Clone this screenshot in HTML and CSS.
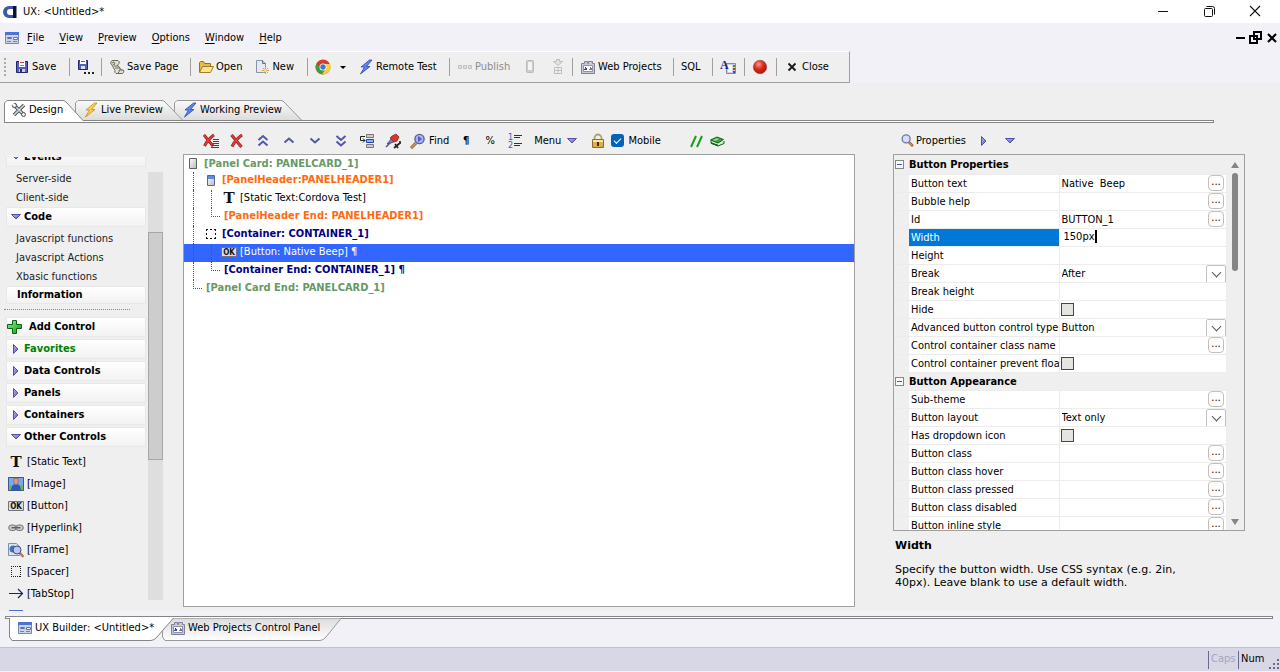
FILE: index.html
```
<!DOCTYPE html>
<html lang="en">
<head>
<meta charset="utf-8">
<title>UX: &lt;Untitled&gt;*</title>
<link rel="stylesheet" href="styles.css">
</head>
<body>
<svg class="defs" aria-hidden="true">
  <defs>
    <linearGradient id="g-tab" x1="0" y1="0" x2="0" y2="1"><stop offset="0" stop-color="#fafafa"/><stop offset="1" stop-color="#dcdcdc"/></linearGradient>
    <linearGradient id="g-tab2" x1="0" y1="0" x2="0" y2="1"><stop offset="0" stop-color="#dcdcdc"/><stop offset="1" stop-color="#fff"/></linearGradient>
    <linearGradient id="g-tri" x1="0" y1="0" x2="1" y2="1"><stop offset="0" stop-color="#b4b4f4"/><stop offset="1" stop-color="#5c5cd0"/></linearGradient>
    <linearGradient id="g-grn" x1="0" y1="0" x2="1" y2="1"><stop offset="0" stop-color="#8df08d"/><stop offset="1" stop-color="#08a010"/></linearGradient>
    <radialGradient id="g-red" cx=".4" cy=".3" r=".8"><stop offset="0" stop-color="#f79a88"/><stop offset=".45" stop-color="#d92a1c"/><stop offset="1" stop-color="#a01008"/></radialGradient>
    <linearGradient id="g-card" x1="0" y1="0" x2="1" y2="1"><stop offset="0" stop-color="#fff"/><stop offset="1" stop-color="#b8b8b8"/></linearGradient>
  </defs>
  <symbol id="i-app" viewBox="0 0 16 16"><path fill="#3c5aa8" fill-rule="evenodd" d="M7 2h6v12H7A6 6 0 0 1 7 2zM8 5a3 3 0 0 0 0 6h3V5z"/><path fill="#0c1238" d="M11 2h3.500v12H11z"/></symbol>
  <symbol id="i-form" viewBox="0 0 16 16"><path fill="#cdd6e8" stroke="#7488b8" d="M1.500 2.500h13v11h-13z"/><path fill="#4c74d8" d="M1 2h14v3H1z"/><path fill="#fff" stroke="#6474a0" d="M3.500 7.500h4v1h-4zM9.500 7.500h4v2h-4z"/><path stroke="#7484a8" d="M3 11.500h4M9 11.500h4"/></symbol>
  <symbol id="i-save" viewBox="0 0 16 16"><path fill="#5362b8" stroke="#20286c" d="M2.500 2.500h11v11h-11z"/><path fill="#fff" d="M5 2h6v6H5z"/><path stroke="#d04040" d="M6 3.500h4"/><path stroke="#8890b8" d="M6 6.500h4"/><path fill="#c8cce0" d="M5 10h6v3H5z"/><path fill="#28306c" d="M6 10h2v3H6z"/></symbol>
  <symbol id="i-saveas" viewBox="0 0 18 16"><path fill="#5362b8" stroke="#20286c" d="M1.500 1.500h9v9h-9z"/><path fill="#fff" d="M3 1h6v4H3z"/><path stroke="#d04040" d="M4 2.500h4"/><path fill="#dde" d="M4 7h4v3H4z"/><path fill="#222" d="M7 13h2v2H7zM11 13h2v2h-2zM15 13h2v2h-2z"/></symbol>
  <symbol id="i-scroll" viewBox="0 0 16 16"><path fill="#e4e2da" stroke="#6c6858" d="M3 1.500h6q2 1 1 3L8.500 6l4 5h2q1 2-1 3.500H7q-2-1-1-3L3 6Q0 4 3 1.500z"/><path fill="none" stroke="#6c6858" d="M3 4l2-1 1 2-2 1M5 7h4M6 9h5M9 14q2-1 1-3h3"/></symbol>
  <symbol id="i-open" viewBox="0 0 16 16"><path fill="#e8b848" stroke="#98701c" d="M1.500 13V3.500l1-1h3l1 2h6v3"/><path fill="#fde69a" stroke="#a87c20" d="M1.500 13.500l3-6h11l-3 6z"/></symbol>
  <symbol id="i-new" viewBox="0 0 16 16"><path fill="#e4e9f4" stroke="#8892a8" d="M2.500 1.500h6l3 3v9h-9z"/><path fill="#b8c4dc" stroke="#68748c" d="M8.500 1.500v3h3"/><path stroke="#eaa41c" d="M11.500 8v7M8 11.500h7M9 9l5 5M14 9l-5 5"/><circle cx="11.500" cy="11.500" r="1.500" fill="#ffe27a"/></symbol>
  <symbol id="i-chrome" viewBox="0 0 16 16"><circle cx="8" cy="8" r="7.500" fill="#d83a2c"/><path fill="#3f9d3c" d="M1.500 4.500A7.500 7.500 0 0 0 7 15.400L10 10 5 9z"/><path fill="#f6cf3a" d="M15 5a7.500 7.500 0 0 1-8 10.400L11 9 9.500 5z"/><circle cx="8" cy="8" r="3.500" fill="#fff"/><circle cx="8" cy="8" r="2.700" fill="#3c78d8"/></symbol>
  <symbol id="i-bolt" viewBox="0 0 16 16"><path stroke="currentColor" stroke-width=".8" d="M11.500 1L3 8h3.500L2.500 15 12 7.500H8.500L14 1z"/></symbol>
  <symbol id="i-publish" viewBox="0 0 16 16"><path fill="#e0e0e0" stroke="#c0c0c0" d="M1.500 6.500h3v3h-3zM6.500 6.500h3v3h-3zM11.500 6.500h3v3h-3z"/></symbol>
  <symbol id="i-phone" viewBox="0 0 16 16"><rect x="4.500" y="1.500" width="7" height="12" rx="1" fill="#ccc" stroke="#bbb"/><path fill="#f4f4f4" d="M6 3h4v8H6z"/></symbol>
  <symbol id="i-down" viewBox="0 0 16 16"><path fill="#e4e4e4" stroke="#bcbcbc" d="M6.500.500h3v2h3l-4.500 4-4.500-4h3z"/><path fill="#f4f4f4" stroke="#bcbcbc" d="M4.500 8.500h7v6h-7zM5 11.500h6M8 9v5"/></symbol>
  <symbol id="i-web" viewBox="0 0 16 16"><path fill="#c9c9d6" stroke="#80809c" d="M1.500 4.500h3v-2h3v2h1v-2h4v2h2v10h-13z"/><path fill="#fff" stroke="#9090a8" d="M3.500 6.500h9v6h-9z"/><path fill="#2448b8" d="M5 8h1v1h1v2H4v-1h1z"/><path fill="#777" d="M10 8h1v1h1v2H9v-1h1z"/></symbol>
  <symbol id="i-font" viewBox="0 0 16 16"><path fill="#d0d0e0" stroke="#8888a4" d="M6.500 4.500h9v10h-9z"/><path fill="#fff" d="M8 6h4v7H8z"/><path fill="#18b030" d="M13 6h2v2h-2z"/><path fill="#e02020" d="M13 9h2v2h-2z"/><path fill="#2848e0" d="M13 12h2v2h-2z"/><text class="t-a" x="0" y="10">A</text></symbol>
  <symbol id="i-rec" viewBox="0 0 16 16"><circle cx="8" cy="8" r="6.700" fill="url(#g-red)" stroke="#a83c34" stroke-width=".6"/></symbol>
  <symbol id="i-x" viewBox="0 0 16 16"><path stroke="#181818" stroke-width="1.800" d="M4.500 4.500l7 7M11.500 4.500l-7 7"/></symbol>
  <symbol id="i-mx" viewBox="0 0 16 16"><path stroke="#000" stroke-width="2.200" d="M4 4l8 8M12 4l-8 8"/></symbol>
  <symbol id="i-tools" viewBox="0 0 16 16"><path stroke="#505058" stroke-width="3.500" d="M3 3l10 10M13 3L3 13"/><path stroke="#d4d4dc" stroke-width="1.600" d="M3 3l10 10M13 3L3 13"/><circle cx="3.500" cy="3.500" r="2.200" fill="#ccc" stroke="#505058"/><circle cx="12.500" cy="12.500" r="2" fill="#eee" stroke="#505058"/><path stroke="#fff" stroke-width="1.800" d="M1 1l3 3"/></symbol>
  <symbol id="i-del" viewBox="0 0 16 16"><path fill="none" stroke="#8c1c1c" stroke-width="3" d="M2.500 2l10 12M13 2Q7 6 3 13.500"/><path fill="none" stroke="#e03c34" stroke-width="1.800" d="M2.500 2l10 12M13 2Q7 6 3 13.500"/></symbol>
  <symbol id="i-dellist" viewBox="0 0 16 16"><path fill="none" stroke="#8c1c1c" stroke-width="2.800" d="M1 2l9 11M11 2Q5 6 1.500 13"/><path fill="none" stroke="#e03c34" stroke-width="1.600" d="M1 2l9 11M11 2Q5 6 1.500 13"/><path stroke="#444" d="M10 6.500h6M10 8.500h6M10 10.500h6M9 12.500h7M8 14.500h8"/></symbol>
  <symbol id="i-up2" viewBox="0 0 16 16"><path fill="none" stroke="#5454b4" stroke-width="2" d="M3.500 7l4.500-4 4.500 4M3.500 12.500L8 8.500l4.500 4"/></symbol>
  <symbol id="i-up1" viewBox="0 0 16 16"><path fill="none" stroke="#5454b4" stroke-width="2" d="M3.500 9.500l4.500-4 4.500 4"/></symbol>
  <symbol id="i-dn1" viewBox="0 0 16 16"><path fill="none" stroke="#5454b4" stroke-width="2" d="M3.500 5.500l4.500 4 4.500-4"/></symbol>
  <symbol id="i-dn2" viewBox="0 0 16 16"><path fill="none" stroke="#5454b4" stroke-width="2" d="M3.500 3L8 7l4.500-4M3.500 8.500l4.500 4 4.500-4"/></symbol>
  <symbol id="i-insert" viewBox="0 0 16 16"><path fill="#ccc" stroke="#777" d="M7.500 1.500h7v3h-7zM7.500 11.500h7v3h-7z"/><path fill="#8cb4ff" stroke="#2040c8" d="M7.500 6.500h7v3h-7z"/><path fill="none" stroke="#222" d="M6 3.500H1.500v4H6M4 5.500l2 2-2 2"/></symbol>
  <symbol id="i-pins" viewBox="0 0 16 16"><path stroke="#4c5878" stroke-width="1.500" d="M1 14l6-6"/><path fill="#6c86cc" stroke="#303c78" stroke-width=".7" d="M2 11l4-5 3 3z"/><path fill="#d83830" stroke="#8c1814" stroke-width=".7" d="M7 3l4-2 3 3-2 4-3 1-4-4z"/><path stroke="#222" stroke-width="1.700" d="M9 15l6-5M10 11l3 4M15 8v3"/></symbol>
  <symbol id="i-find" viewBox="0 0 16 16"><path stroke="#7c4c24" stroke-width="3" d="M1 15l5-5"/><path stroke="#dc9c58" stroke-width="1.600" d="M1 15l5-5"/><circle cx="9.500" cy="6" r="4.600" fill="#a8b4ec" stroke="#5860a0" stroke-width="1.400"/><path fill="#5058c0" d="M8 3l4 3-4 3z"/></symbol>
  <symbol id="i-mag" viewBox="-2 -1 19 19"><path stroke="#8a5420" stroke-width="3" d="M9.500 9.500l5 5"/><path stroke="#dba05c" stroke-width="1.300" d="M10 10l4 4"/><circle cx="6.500" cy="6" r="4.700" fill="#d8dcfa" stroke="#7078a8" stroke-width="1.600"/></symbol>
  <symbol id="i-list" viewBox="0 0 16 16"><path stroke="#333" d="M7 2.500h8M7 4.500h6M7 10.500h8M7 12.500h6"/><text class="t-n" x="1" y="7">1</text><text class="t-n" x="1" y="15">2</text></symbol>
  <symbol id="i-trid" viewBox="0 0 16 16"><path fill="url(#g-tri)" stroke="#5450a8" d="M3.500 5.500h9L8 10z"/></symbol>
  <symbol id="i-trir" viewBox="0 0 16 16"><path fill="url(#g-tri)" stroke="#5450a8" d="M5.500 3.500v9L10 8z"/></symbol>
  <symbol id="i-lock" viewBox="0 0 16 16"><path fill="none" stroke="#b0a070" stroke-width="1.800" d="M4.500 8V5a3.500 3.500 0 0 1 7 0v3"/><path fill="#dcae48" stroke="#8c6c2c" d="M2.500 6.500h11v8h-11z"/><path fill="#fae6a4" d="M3 7h10v2H3z"/><path fill="#403010" d="M7 9h2v4H7z"/></symbol>
  <symbol id="i-slash" viewBox="0 0 16 16"><path stroke="#18a018" stroke-width="2" d="M2 14L7 3M8 14l5-11"/></symbol>
  <symbol id="i-book" viewBox="0 0 16 16"><path fill="#dcecd8" stroke="#0c6414" d="M2 8v2l7 3 6-2.500V8"/><path fill="#38a838" stroke="#0c6414" d="M1.500 7L8 4l6.500 2.500L9 10z"/><path fill="#90dc88" d="M4 7l4-2 2 1-4 2z"/><path stroke="#0c6414" stroke-width="1.500" d="M2 10L9 12.500"/></symbol>
  <symbol id="i-plus" viewBox="0 0 16 16"><path fill="url(#g-grn)" stroke="#0c6414" d="M5.500 1.500h4v4h5v4h-5v5h-4v-5h-5v-4h5z"/></symbol>
  <symbol id="i-text" viewBox="0 0 16 16"><text class="t-t" x="8" y="13">T</text></symbol>
  <symbol id="i-image" viewBox="0 0 16 16"><path fill="#7aa8f0" d="M0 1h16v14H0z"/><path fill="#68c040" d="M0 9h16v6H0z"/><path fill="#2c58c0" d="M3 15q0-7 5-7t5 7z"/><path fill="#dc9c78" stroke="#7c4c34" stroke-width=".5" d="M5.800 2.500h4.400v4.500L8 9 5.800 7z"/><path fill="none" stroke="#40588c" d="M.500 1.500h15v13H.500z"/></symbol>
  <symbol id="i-ok" viewBox="0 0 16 16"><path fill="#dcdce0" stroke="#74747c" d="M.500 3.500h15v9H.500z"/><text class="t-ok" x="8" y="11">OK</text></symbol>
  <symbol id="i-link" viewBox="0 0 16 16"><rect x=".7" y="5" width="7.500" height="5.500" rx="2.700" fill="#ccc" stroke="#707070"/><rect x="7.800" y="5" width="7.500" height="5.500" rx="2.700" fill="#ccc" stroke="#707070"/><path stroke="#606060" stroke-width="1.500" d="M3.500 7.700h9"/></symbol>
  <symbol id="i-iframe" viewBox="0 0 16 16"><path fill="#dde3f0" stroke="#8490a8" d="M.500 1.500h8l3 3v9h-11z"/><circle cx="5" cy="7" r="3.500" fill="#3c74b8"/><path stroke="#b87c3c" stroke-width="2.500" d="M12 11l3.500 4"/><circle cx="9" cy="8" r="4" fill="#b8c8f0" stroke="#444c80"/></symbol>
  <symbol id="i-spacer" viewBox="0 0 16 16"><path fill="none" stroke="#222" stroke-dasharray="1 1" d="M3 2.500h10M3 12.500h10M3.500 2v11M12.500 2v11"/></symbol>
  <symbol id="i-cont" viewBox="0 0 16 16"><path fill="none" stroke="#111" stroke-dasharray="2 2" d="M3 3.500h10M3 12.500h10M3.500 3v10M12.500 3v10"/></symbol>
  <symbol id="i-tab" viewBox="0 0 16 16"><path fill="none" stroke="#20205c" stroke-width="1.200" d="M1 7.500h13.500M10 3l4.500 4.500L10 12"/></symbol>
  <symbol id="i-card" viewBox="0 0 16 16"><path fill="url(#g-card)" stroke="#606060" d="M4.500 3.500h7v10h-7z"/></symbol>
  <symbol id="i-cardh" viewBox="0 0 16 16"><path fill="url(#g-card)" stroke="#58688c" d="M4.500 3.500h7v10h-7z"/><path fill="#5c8ce8" d="M5 4h6v3H5z"/></symbol>
  <symbol id="i-min" viewBox="0 0 16 16"><path stroke="#111" d="M3 7.500h10"/></symbol>
  <symbol id="i-restore" viewBox="0 0 16 16"><rect x="3.500" y="4.500" width="8" height="8" rx="1" fill="none" stroke="#111"/><path fill="none" stroke="#111" d="M5.500 2.500h6q2 0 2 2v6"/></symbol>
  <symbol id="i-close" viewBox="0 0 16 16"><path stroke="#111" stroke-width="1.100" d="M3 2l10 10M13 2L3 12"/></symbol>
  <symbol id="i-mmin" viewBox="0 0 16 16"><path stroke="#000" stroke-width="2" d="M4 8h9"/></symbol>
  <symbol id="i-mres" viewBox="0 0 16 16"><path fill="none" stroke="#000" stroke-width="2" d="M2 6h7v7H2zM6 2h7v7H6z"/></symbol>
</svg>

<header class="titlebar">
  <svg class="ico"><use href="#i-app"/></svg>
  <h1 class="title">UX: &lt;Untitled&gt;*</h1>
  <div class="winbtns">
    <button aria-label="Minimize"><svg class="ico"><use href="#i-min"/></svg></button>
    <button aria-label="Restore"><svg class="ico"><use href="#i-restore"/></svg></button>
    <button aria-label="Close window"><svg class="ico"><use href="#i-close"/></svg></button>
  </div>
</header>

<nav class="menubar">
  <svg class="ico"><use href="#i-form"/></svg>
  <button><u>F</u>ile</button><button><u>V</u>iew</button><button><u>P</u>review</button><button><u>O</u>ptions</button><button><u>W</u>indow</button><button><u>H</u>elp</button>
  <div class="docbtns">
    <button aria-label="Minimize document"><svg class="ico"><use href="#i-mmin"/></svg></button>
    <button aria-label="Restore document"><svg class="ico"><use href="#i-mres"/></svg></button>
    <button aria-label="Close document"><svg class="ico"><use href="#i-mx"/></svg></button>
  </div>
</nav>

<div class="toolrow">
  <div class="toolbar">
    <div class="grp w-save"><button><svg class="ico"><use href="#i-save"/></svg>Save</button></div>
    <div class="grp w-icon"><button aria-label="Save as"><svg class="ico wide"><use href="#i-saveas"/></svg></button></div>
    <div class="grp w-page"><button><svg class="ico"><use href="#i-scroll"/></svg>Save Page</button></div>
    <div class="grp w-open"><button><svg class="ico"><use href="#i-open"/></svg>Open</button><button class="push"><svg class="ico"><use href="#i-new"/></svg>New</button></div>
    <div class="grp w-remote"><button aria-label="Chrome"><svg class="ico"><use href="#i-chrome"/></svg></button><button class="caret" aria-label="Browsers"></button><button class="push"><svg class="ico blue"><use href="#i-bolt"/></svg>Remote Test</button></div>
    <div class="grp w-pub"><button disabled><svg class="ico"><use href="#i-publish"/></svg>Publish</button><button class="push" aria-label="Device"><svg class="ico"><use href="#i-phone"/></svg></button><button class="push" aria-label="Download"><svg class="ico"><use href="#i-down"/></svg></button></div>
    <div class="grp w-web"><button><svg class="ico"><use href="#i-web"/></svg>Web Projects</button></div>
    <div class="grp w-sql"><button>SQL</button></div>
    <div class="grp w-icon"><button aria-label="Styles"><svg class="ico"><use href="#i-font"/></svg></button></div>
    <div class="grp w-icon"><button aria-label="Record"><svg class="ico"><use href="#i-rec"/></svg></button></div>
    <div class="grp w-close"><button><svg class="ico"><use href="#i-x"/></svg>Close</button></div>
  </div>
</div>

<div class="workspace">
  <div class="tabs">
    <button class="tab t-design"><svg class="shape" viewBox="0 0 80 21" preserveAspectRatio="none"><path fill="#fff" stroke="#858585" d="M.500 21V3L3 .500h56Q61 .500 63 3l16.500 18"/></svg><svg class="ico"><use href="#i-tools"/></svg>Design</button>
    <button class="tab t-live"><svg class="shape" viewBox="0 0 108 21" preserveAspectRatio="none"><path fill="url(#g-tab)" stroke="#999" d="M.500 20V3L3 .500h84Q89 .500 91 3l16.500 17"/></svg><svg class="ico gold"><use href="#i-bolt"/></svg>Live Preview</button>
    <button class="tab t-work"><svg class="shape" viewBox="0 0 128 21" preserveAspectRatio="none"><path fill="url(#g-tab)" stroke="#999" d="M.500 20V3L3 .500h104Q109 .500 111 3l16.500 17"/></svg><svg class="ico blue"><use href="#i-bolt"/></svg>Working Preview</button>
  </div>
  <div class="rule topline"></div>

  <main class="cols">
    <aside class="side">
      <div class="sidelist">
        <h2 class="sec scrolled"><svg class="ico"><use href="#i-trid"/></svg>Events</h2>
        <a href="#" class="lnk">Server-side</a>
        <a href="#" class="lnk">Client-side</a>
        <h2 class="sec"><svg class="ico"><use href="#i-trid"/></svg>Code</h2>
        <a href="#" class="lnk">Javascript functions</a>
        <a href="#" class="lnk">Javascript Actions</a>
        <a href="#" class="lnk">Xbasic functions</a>
        <h2 class="sec info">Information</h2>
        <hr class="dots">
        <h2 class="sec add"><svg class="ico"><use href="#i-plus"/></svg>Add Control</h2>
        <h2 class="sec fav"><svg class="ico"><use href="#i-trir"/></svg>Favorites</h2>
        <h2 class="sec"><svg class="ico"><use href="#i-trir"/></svg>Data Controls</h2>
        <h2 class="sec"><svg class="ico"><use href="#i-trir"/></svg>Panels</h2>
        <h2 class="sec"><svg class="ico"><use href="#i-trir"/></svg>Containers</h2>
        <h2 class="sec last"><svg class="ico"><use href="#i-trid"/></svg>Other Controls</h2>
        <button class="ctl"><svg class="ico"><use href="#i-text"/></svg>[Static Text]</button>
        <button class="ctl"><svg class="ico"><use href="#i-image"/></svg>[Image]</button>
        <button class="ctl"><svg class="ico"><use href="#i-ok"/></svg>[Button]</button>
        <button class="ctl"><svg class="ico"><use href="#i-link"/></svg>[Hyperlink]</button>
        <button class="ctl"><svg class="ico"><use href="#i-iframe"/></svg>[IFrame]</button>
        <button class="ctl"><svg class="ico"><use href="#i-spacer"/></svg>[Spacer]</button>
        <button class="ctl"><svg class="ico"><use href="#i-tab"/></svg>[TabStop]</button>
        <button class="ctl"><svg class="ico"><use href="#i-form"/></svg>[Embedded Object]</button>
      </div>
      <div class="sbar"><div class="sthumb"></div></div>
    </aside>

    <section class="center">
      <div class="ctools">
        <button class="ib" aria-label="Delete list"><svg class="ico"><use href="#i-dellist"/></svg></button>
        <button class="ib" aria-label="Delete"><svg class="ico"><use href="#i-del"/></svg></button>
        <button class="ib" aria-label="Move first"><svg class="ico"><use href="#i-up2"/></svg></button>
        <button class="ib" aria-label="Move up"><svg class="ico"><use href="#i-up1"/></svg></button>
        <button class="ib" aria-label="Move down"><svg class="ico"><use href="#i-dn1"/></svg></button>
        <button class="ib" aria-label="Move last"><svg class="ico"><use href="#i-dn2"/></svg></button>
        <button class="ib" aria-label="Insert"><svg class="ico"><use href="#i-insert"/></svg></button>
        <button class="ib" aria-label="Attach"><svg class="ico"><use href="#i-pins"/></svg></button>
        <button class="findbtn"><svg class="ico"><use href="#i-find"/></svg>Find</button>
        <button class="ib nar"><b>¶</b></button>
        <button class="ib nar">%</button>
        <button class="ib" aria-label="Numbering"><svg class="ico"><use href="#i-list"/></svg></button>
        <button class="menubtn">Menu<svg class="ico"><use href="#i-trid"/></svg></button>
        <button class="ib nar" aria-label="Lock"><svg class="ico"><use href="#i-lock"/></svg></button>
        <label class="mobile"><input type="checkbox" checked>Mobile</label>
        <button class="ib nar" aria-label="Comment"><svg class="ico"><use href="#i-slash"/></svg></button>
        <button class="ib book" aria-label="Help book"><svg class="ico"><use href="#i-book"/></svg></button>
      </div>
      <div class="tree">
        <div class="row first grn"><svg class="ico node"><use href="#i-card"/></svg>[Panel Card: PANELCARD_1]</div>
        <div class="row org"><i class="g"></i><svg class="ico node"><use href="#i-cardh"/></svg>[PanelHeader:PANELHEADER1]</div>
        <div class="row"><i class="g"></i><i class="g"></i><svg class="ico node"><use href="#i-text"/></svg>[Static Text:Cordova Test]</div>
        <div class="row org"><i class="g"></i><i class="ge"></i>[PanelHeader End: PANELHEADER1]</div>
        <div class="row navy"><i class="g"></i><svg class="ico node"><use href="#i-cont"/></svg>[Container: CONTAINER_1]</div>
        <div class="row sel"><i class="g"></i><i class="g"></i><svg class="ico node"><use href="#i-ok"/></svg>[Button: Native Beep] ¶</div>
        <div class="row navy"><i class="g"></i><i class="ge"></i>[Container End: CONTAINER_1] ¶</div>
        <div class="row grn"><i class="ge"></i>[Panel Card End: PANELCARD_1]</div>
      </div>
    </section>

    <aside class="props">
      <div class="ptools">
        <svg class="ico"><use href="#i-mag"/></svg><span>Properties</span>
        <button class="ib" aria-label="Next"><svg class="ico"><use href="#i-trir"/></svg></button>
        <button class="ib" aria-label="More"><svg class="ico"><use href="#i-trid"/></svg></button>
      </div>
      <div class="pgrid">
        <div class="ptable">
          <table>
            <colgroup><col class="c-gut"><col class="c-name"><col><col class="c-btn"></colgroup>
            <tbody>
            <tr class="head"><td><button class="fold" aria-label="Collapse"></button></td><th colspan="3">Button Properties</th></tr>
            <tr><td></td><td>Button text</td><td>Native&nbsp; Beep</td><td><button class="dots3">...</button></td></tr>
            <tr><td></td><td>Bubble help</td><td></td><td><button class="dots3">...</button></td></tr>
            <tr><td></td><td>Id</td><td>BUTTON_1</td><td><button class="dots3">...</button></td></tr>
            <tr class="cur"><td></td><td><label for="width">Width</label></td><td colspan="2"><span class="edit"><input id="width" value="150px" size="4"></span></td></tr>
            <tr><td></td><td>Height</td><td colspan="2"></td></tr>
            <tr><td></td><td><label for="brk">Break</label></td><td colspan="2"><select id="brk"><option>After</option></select></td></tr>
            <tr><td></td><td>Break height</td><td colspan="2"></td></tr>
            <tr><td></td><td><label for="hide">Hide</label></td><td colspan="2"><input type="checkbox" id="hide"></td></tr>
            <tr><td></td><td><label for="adv">Advanced button control type</label></td><td colspan="2"><select id="adv"><option>Button</option></select></td></tr>
            <tr><td></td><td>Control container class name</td><td></td><td><button class="dots3">...</button></td></tr>
            <tr><td></td><td><label for="flt">Control container prevent float</label></td><td colspan="2"><input type="checkbox" id="flt"></td></tr>
            <tr class="head"><td><button class="fold" aria-label="Collapse"></button></td><th colspan="3">Button Appearance</th></tr>
            <tr><td></td><td>Sub-theme</td><td></td><td><button class="dots3">...</button></td></tr>
            <tr><td></td><td><label for="lay">Button layout</label></td><td colspan="2"><select id="lay"><option>Text only</option></select></td></tr>
            <tr><td></td><td><label for="dd">Has dropdown icon</label></td><td colspan="2"><input type="checkbox" id="dd"></td></tr>
            <tr><td></td><td>Button class</td><td></td><td><button class="dots3">...</button></td></tr>
            <tr><td></td><td>Button class hover</td><td></td><td><button class="dots3">...</button></td></tr>
            <tr><td></td><td>Button class pressed</td><td></td><td><button class="dots3">...</button></td></tr>
            <tr><td></td><td>Button class disabled</td><td></td><td><button class="dots3">...</button></td></tr>
            <tr><td></td><td>Button inline style</td><td></td><td><button class="dots3">...</button></td></tr>
            </tbody>
          </table>
        </div>
        <div class="pscroll"><i class="au"></i><i class="pt"></i><i class="ad"></i></div>
      </div>
      <div class="desc"><h3>Width</h3><p>Specify the button width. Use CSS syntax (e.g. 2in, 40px). Leave blank to use a default width.</p></div>
    </aside>
  </main>
</div>

<footer>
  <div class="rule botline"></div>
  <div class="btabs">
    <button class="btab b-ux"><svg class="shape" viewBox="0 0 165 23" preserveAspectRatio="none"><path fill="#fff" stroke="#858585" d="M.500 0v19L3 22.500h139Q145 22.500 148 19L164.500 0"/></svg><svg class="ico"><use href="#i-form"/></svg>UX Builder: &lt;Untitled&gt;*</button>
    <button class="btab b-web"><svg class="shape" viewBox="0 0 180 23" preserveAspectRatio="none"><path fill="url(#g-tab2)" stroke="#999" d="M10 .500L.500 9v10L3 22.500h155Q161 22.500 164 19L179 .500"/></svg><svg class="ico"><use href="#i-web"/></svg>Web Projects Control Panel</button>
  </div>
  <div class="status"><span class="off">Caps</span><span>Num</span>
    <svg class="gripper" viewBox="0 0 12 12"><path fill="#6c6894" d="M9 0h2v2H9zM5 4h2v2H5zM9 4h2v2H9zM1 8h2v2H1zM5 8h2v2H5zM9 8h2v2H9z"/></svg>
  </div>
</footer>
</body>
</html>
```
FILE: styles.css
```
* { box-sizing: border-box; }
body {
  margin: 0;
  height: 100vh;
  display: flex;
  flex-direction: column;
  background: #f2f1f7;
  color: #000;
  font: 11px/16px "DejaVu Sans Condensed", "DejaVu Sans", sans-serif;
  overflow: hidden;
}
button, input, select { font: inherit; color: inherit; margin: 0; padding: 0; border: 0; background: none; }
button { display: flex; align-items: center; white-space: nowrap; }
h1, h2, h3, p { margin: 0; font-size: inherit; }
.defs { position: absolute; width: 0; height: 0; }
.ico { width: 16px; height: 16px; flex: none; }
.wide { width: 18px; }
.blue { fill: #5c86f4; color: #2c44b0; }
.gold { fill: #ffd24c; color: #c48c10; }
.t-a { font: bold 12px "Liberation Serif", serif; fill: #1c1ca0; }
.t-n { font: 8px "DejaVu Sans", sans-serif; fill: #3858c8; }
.t-t { font: bold 15px "DejaVu Serif", serif; fill: #111; text-anchor: middle; }
.t-ok { font: bold 8px "DejaVu Sans Condensed", sans-serif; fill: #111; text-anchor: middle; }

/* window frame */
.titlebar { height: 23px; background: #fff; display: flex; align-items: center; padding-left: 2px; flex: none; }
.title { font-weight: normal; margin-left: 5px; }
.winbtns { margin-left: auto; display: flex; gap: 30px; padding-right: 17px; }
.menubar { height: 28px; display: flex; align-items: center; padding: 2px 0 0 4px; flex: none; gap: 15px; }
.menubar > .ico { margin-right: -8px; }
.menubar u { text-underline-offset: 2px; }
.docbtns { margin-left: auto; display: flex; }

/* main toolbar */
.toolrow { display: flex; height: 32px; flex: none; }
.toolbar { flex: 0 1 850px; display: flex; align-items: center; background: #efefef; border: solid #a0a0a0; border-width: 0 1px 1px 0; border-top: 1px solid #fff; padding-left: 4px; }
.toolbar::before { content: ""; width: 0; height: 18px; border-left: 2px dotted #aaa; }
.toolbar button { gap: 2px; }
.grp { height: 18px; display: flex; align-items: center; border-right: 1px solid #a0a0a0; padding-left: 7px; }
.grp:last-child { border: 0; }
.w-save { width: 64px; padding-left: 8px; }
.w-icon { width: 32px; }
.w-page { width: 89px; }
.w-open { width: 117px; }
.w-remote { width: 142px; }
.w-pub { width: 123px; }
.w-web { width: 101px; }
.w-sql { width: 39px; }
.w-close { width: 70px; }
.push { margin-left: 12px; }
.caret { border: solid transparent; border-width: 3px 3px 0; border-top-color: #000; margin-left: 9px; }
.toolbar button:disabled { color: #8c8c8c; }

/* working area */
.workspace { flex: 1; min-height: 0; display: flex; flex-direction: column; background: #efefef; padding-top: 17px; }
.tabs { display: flex; padding-left: 4px; flex: none; }
.tab, .btab { position: relative; isolation: isolate; gap: 2px; }
.tab { height: 21px; padding: 0 0 1px 7px; }
.shape { position: absolute; inset: 0; width: 100%; height: 100%; z-index: -1; }
.t-design { width: 80px; z-index: 3; }
.t-live { width: 108px; margin-left: -9px; z-index: 2; padding-left: 8px; }
.t-work { width: 128px; margin-left: -9px; z-index: 1; padding-left: 8px; }
.rule { height: 3px; border: 1px solid #858585; background: #fff; flex: none; }
.topline { margin: -1px 66px 0 4px; }
.cols { flex: 1; min-height: 0; display: grid; grid-template: minmax(0, 1fr) / 164px minmax(0, 1fr) 352px; padding-right: 35px; }

.side { display: grid; grid-template-columns: 1fr 16px; padding-top: 34px; }
.sidelist { overflow: hidden; padding: 0 2px 0 6px; }
.sec { display: flex; align-items: center; height: 20px; margin-bottom: 2px; padding-left: 1px; border: 1px solid #e8e8e8; background: linear-gradient(#fff, #f2f2f2); font-weight: bold; }
.scrolled { margin-top: -10px; }
.info { height: 18px; padding-left: 10px; margin: 0; }
.add { gap: 6px; padding-left: 0; }
.fav { color: #008000; }
.last { margin-bottom: 4px; }
.lnk { display: block; height: 19px; line-height: 19px; padding-left: 10px; color: #1c1c1c; text-decoration: none; }
.lnk + .sec { margin-top: 0; }
.dots { border: 0; border-top: 1px dotted #888; margin: 5px 16px 7px -2px; }
.ctl { height: 22px; gap: 3px; padding-left: 2px; }
.sbar { background: #dedede; margin: 15px 1px 11px 0; padding-top: 60px; min-height: 0; }
.sthumb { height: 62%; max-height: 230px; background: #cdcdcd; border: 1px solid #a6a6a6; }

.center { display: flex; flex-direction: column; margin: 0 38px 4px 19px; min-width: 0; }
.ctools { display: flex; align-items: center; height: 31px; padding: 4px 0 0 15px; flex: none; }
.ib { width: 26px; height: 22px; justify-content: center; }
.nar { width: 24px; }
.findbtn, .menubtn { gap: 3px; padding-left: 4px; }
.findbtn { margin-right: 5px; }
.menubtn { margin: 0 6px 0 2px; }
.mobile { display: flex; align-items: center; gap: 4px; margin-right: 24px; }
.mobile input { appearance: none; width: 13px; height: 13px; border-radius: 3px; background: #0560b8; margin-left: 1px; display: grid; place-items: center; }
.mobile input::before { content: ""; width: 6px; height: 3px; border: solid #fff; border-width: 0 0 1px 1px; rotate: -45deg; margin-bottom: 2px; }
.book { width: 16px; }
.tree { flex: 1; min-height: 0; background: #fff; border: 1px solid #a0a0a0; }
.row { display: flex; height: 18px; line-height: 15px; padding-left: 9px; white-space: pre; }
.first { height: 17px; line-height: 17px; }
.node { margin: 0 3px 0 -8px; }
.g { width: 18px; height: 18px; border-left: 1px dotted #555; }
.ge { width: 9px; height: 9px; border: dotted #555; border-width: 0 0 1px 1px; margin-right: 4px; }
.grn { color: #669966; font-weight: bold; }
.org { color: #ff6a10; font-weight: bold; }
.navy { color: #000080; font-weight: bold; }
.sel { background: #3366ff; color: #fff; }

/* property sheet */
.props { display: flex; flex-direction: column; min-width: 0; }
.ptools { display: flex; align-items: center; height: 31px; padding: 4px 0 0 6px; flex: none; }
.ptools span { margin: 0 5px 0 1px; }
.pgrid { flex: 1; min-height: 0; border: 1px solid #a0a0a0; display: flex; padding-top: 1px; }
.ptable { flex: 1; min-width: 0; overflow: hidden; }
table { width: 100%; table-layout: fixed; border-collapse: collapse; }
.c-gut { width: 15px; }
.c-name { width: 150px; }
.c-btn { width: 18px; }
td, th { height: 18px; padding: 0; border-bottom: 1px solid #ececec; background: #fff; white-space: nowrap; overflow: hidden; line-height: 15px; text-align: left; }
td:first-child { background: #efefef; border-right: 0; }
td:nth-child(2) { padding-left: 2px; border-right: 1px solid #ececec; }
td:nth-child(3) { padding-left: 2px; }
.head td, .head th { background: #efefef; }
.fold { width: 9px; height: 9px; margin-left: 1px; border: 1px solid #858585; background: linear-gradient(#4060b0, #4060b0) center / 5px 1px no-repeat #f8f8f8; }
.cur td:nth-child(2) { background: #0078d7; color: #fff; }
.edit { display: inline-block; border-right: 2px solid #000; height: 13px; margin-left: 2px; vertical-align: top; line-height: 13px; }
.edit input { width: 31px; display: block; height: 13px; outline: 0; }
.dots3 { width: 16px; height: 16px; border: 1px solid #c0c0c0; border-radius: 4px; justify-content: center; background: #fefefe; line-height: 8px; padding-bottom: 2px; }
select { display: block; appearance: none; width: 100%; height: 17px; border-radius: 0; background: #fff; }
td:has(select) { position: relative; }
td:has(select)::before { content: ""; position: absolute; right: 0; top: 0; width: 18px; height: 17px; border: 1px solid #c0c0c0; border-radius: 2px; pointer-events: none; }
td:has(select)::after { content: ""; position: absolute; right: 6px; top: 4px; width: 6px; height: 6px; border: solid #555; border-width: 0 1px 1px 0; rotate: 45deg; pointer-events: none; }
td input[type="checkbox"] { display: block; appearance: none; width: 13px; height: 13px; border: 1px solid #1c5080; background: #e4e4e0; margin-left: -1px; }
.pscroll { width: 18px; display: flex; flex-direction: column; align-items: center; padding: 6px 0 5px; }
.au, .ad { border: solid transparent; border-width: 0 4px 6px; border-bottom-color: #858585; }
.ad { border-width: 6px 4px 0; border-top-color: #858585; margin-top: auto; }
.pt { width: 6px; height: 98px; border-radius: 3px; background: #858585; margin-top: 5px; }
.desc { height: 80px; flex: none; padding: 7px 36px 0 2px; font: 11px/13px "DejaVu Sans", sans-serif; }
.desc h3 { line-height: 16px; margin-bottom: 9px; }

/* bottom */
footer { flex: none; padding-top: 5px; }
.botline { margin: 0 7px 0 5px; }
.btabs { display: flex; padding-left: 9px; margin-top: -1px; height: 29px; }
.btab { height: 23px; padding: 0 0 3px 8px; }
.b-ux { width: 165px; z-index: 2; }
.b-web { width: 180px; margin-left: -12px; z-index: 1; }
.status { height: 25px; background: #d8d7e5; border-top: 1px solid #c0c0d4; border-bottom: 1px solid #f2f1f7; display: flex; justify-content: flex-end; align-items: center; }
.status span { border-left: 1px solid #6c6894; height: 18px; line-height: 16px; padding-left: 2px; width: 30px; }
.status .off { color: #a4a4c4; }
.gripper { width: 12px; height: 12px; align-self: flex-end; }
```
